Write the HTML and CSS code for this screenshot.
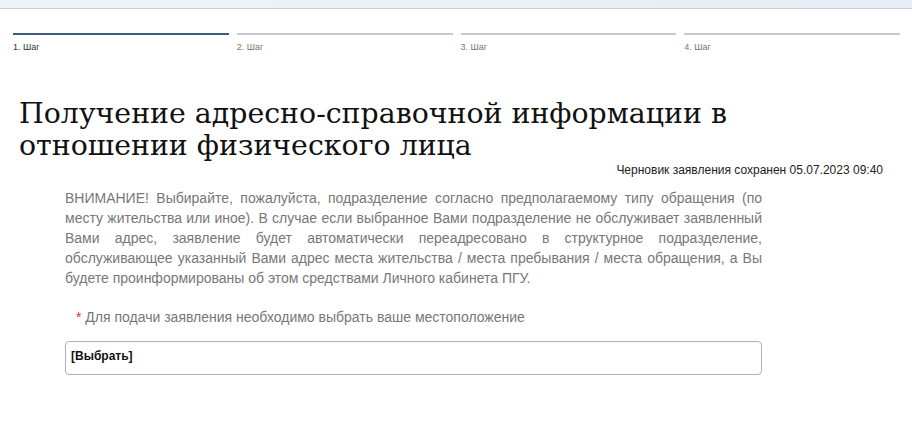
FILE: index.html
```html
<!DOCTYPE html>
<html lang="ru">
<head>
  <meta charset="UTF-8">
  <title>Получение адресно-справочной информации</title>
  <link rel="stylesheet" href="styles.css">
</head>
<body>

  <div class="topbar"></div>

  <ul class="steps">
    <li class="step active">1. Шаг</li>
    <li class="step">2. Шаг</li>
    <li class="step">3. Шаг</li>
    <li class="step">4. Шаг</li>
  </ul>

  <h1 class="title">Получение адресно-справочной информации в отношении физического лица</h1>

  <div class="draft">Черновик заявления сохранен 05.07.2023 09:40</div>

  <div class="form">
    <p class="notice">ВНИМАНИЕ! Выбирайте, пожалуйста, подразделение согласно предполагаемому типу обращения (по месту жительства или иное). В случае если выбранное Вами подразделение не обслуживает заявленный Вами адрес, заявление будет автоматически переадресовано в структурное подразделение, обслуживающее указанный Вами адрес места жительства / места пребывания / места обращения, а Вы будете проинформированы об этом средствами Личного кабинета ПГУ.</p>

    <div class="label"><span class="req">*</span> Для подачи заявления необходимо выбрать ваше местоположение</div>

    <div class="select">[Выбрать]</div>
  </div>

</body>
</html>
```

FILE: styles.css
```css
body {
  margin: 0;
  background: #fff;
  color: #222;
  font-family: "Liberation Sans", Arial, sans-serif;
}

.topbar {
  height: 8px;
  background: linear-gradient(to right, #eef3f9, #e6edf6);
  border-bottom: 1px solid #c6ced8;
}

.steps {
  list-style: none;
  display: flex;
  gap: 8px;
  margin: 24px 12px 0 13px;
  padding: 0;
}

.step {
  flex: 1;
  border-top: 2px solid #c3cad2;
  padding-top: 7px;
  font-size: 9px;
  color: #777;
}

.step.active {
  border-top-color: #3d5c84;
  color: #333;
}

.title {
  font-family: "DejaVu Serif", Georgia, serif;
  font-weight: normal;
  font-size: 28.4px;
  line-height: 32px;
  color: #111;
  margin: 46px 0 0 19px;
  max-width: 740px;
}

.draft {
  text-align: right;
  font-size: 12px;
  color: #222;
  margin: 1px 29px 0 0;
  line-height: 14px;
}

.form {
  margin: 11px 150px 0 65px;
}

.notice {
  margin: 0;
  font-size: 14px;
  line-height: 20px;
  color: #777;
  text-align: justify;
}

.label {
  margin: 21px 0 0 11px;
  font-size: 14px;
  color: #777;
}

.req {
  color: #d33;
}

.select {
  margin-top: 16px;
  height: 32px;
  border: 1px solid #a9b2bb;
  border-radius: 4px;
  padding: 0 5px;
  font-size: 12px;
  font-weight: bold;
  line-height: 28px;
  color: #111;
}
```
